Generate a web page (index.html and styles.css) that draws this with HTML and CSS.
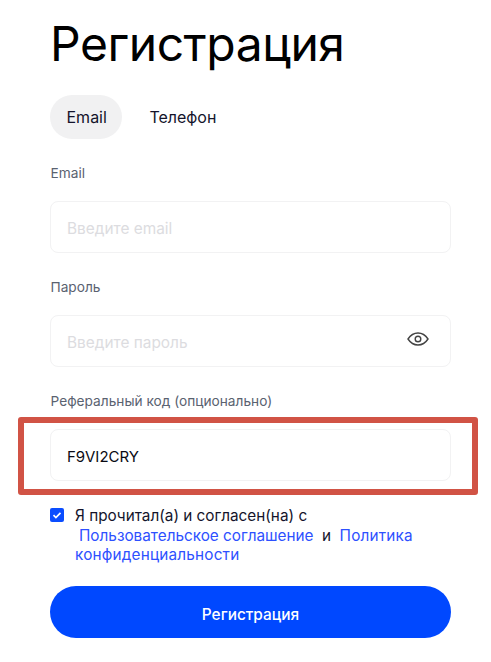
FILE: index.html
```html
<!DOCTYPE html>
<html lang="ru">
<head>
<meta charset="utf-8">
<title>Регистрация</title>
<link rel="stylesheet" href="styles.css">
</head>
<body>
<main class="page">
  <h1 class="title">Регистрация</h1>
  <div class="tabs">
    <div class="tab tab-active">Email</div>
    <div class="tab">Телефон</div>
  </div>
  <div class="field">
    <div class="label">Email</div>
    <div class="input"><span class="placeholder">Введите email</span></div>
  </div>
  <div class="field">
    <div class="label">Пароль</div>
    <div class="input">
      <span class="placeholder">Введите пароль</span>
      <svg class="eye" viewBox="0 0 24 24" width="24" height="24" fill="none" stroke="#444" stroke-width="1.4">
        <path d="M2 12c2.600-4 6-6 10-6s7.400 2 10 6c-2.600 4-6 6-10 6s-7.400-2-10-6z"/>
        <circle cx="12" cy="12" r="2.800"/>
      </svg>
    </div>
  </div>
  <div class="field">
    <div class="label">Реферальный код (опционально)</div>
    <div class="input"><span class="value">F9VI2CRY</span><div class="highlight"></div></div>
  </div>
  <div class="agree">
    <span class="checkbox">
      <svg viewBox="0 0 14 14" width="14" height="14" fill="none" stroke="#fff" stroke-width="1.700"><path d="M3.500 7.200l2.400 2.300 4.600-4.600"/></svg>
    </span>
    <p class="agree-text">Я прочитал(а) и согласен(на) с<br><a class="link link-first">Пользовательское соглашение</a><span class="and">и</span><a class="link link-wide">Политика</a><br><a class="link link-wide">конфиденциальности</a></p>
  </div>
  <div class="submit">Регистрация</div>
</main>
</body>
</html>
```
FILE: styles.css
```css
* { box-sizing: border-box; }
html, body { margin: 0; padding: 0; background: #fff; }
body { font-family: Inter, "Liberation Sans", sans-serif; color: #0a0a14; }
.page { width: 491px; height: 662px; overflow: hidden; padding: 0 40px 0 50px; }
.title { margin: 0; padding-top: 15px; height: 95px; font-size: 48px; line-height: 58px; font-weight: 400; letter-spacing: -0.45px; color: #000; }
.tabs { display: flex; gap: 11px; height: 44px; }
.tab { padding: 0 16px; border-radius: 22px; font-size: 16px; line-height: 44px; color: #14142b; }
.tab-active { padding: 0 15.500px 0 16.500px; background: #f1f1f2; }
.field { padding-top: 26px; }
.label { height: 16px; font-size: 13.700px; line-height: 16px; color: #5a6270; margin-bottom: 20px; padding-left: 0.500px; }
.input { position: relative; display: flex; align-items: center; justify-content: space-between; height: 52px; padding: 0 20px 0 16px; border: 1px solid #f2f2f3; border-radius: 8px; }
.placeholder { display: block; padding-top: 2px; font-size: 15.400px; color: #dcdce0; }
.value { display: block; padding-top: 2px; font-size: 15px; color: #0a0a14; }
.eye { display: block; margin-top: -4px; }
.highlight { position: absolute; left: -33px; top: -13px; width: 460px; height: 78px; border: 6px solid #d15345; border-radius: 3px; pointer-events: none; }
.agree { display: flex; gap: 11px; padding-top: 27px; }
.checkbox { flex: none; width: 14px; height: 14px; background: #0b4dff; border-radius: 2px; display: block; }
.checkbox svg { display: block; }
.agree-text { margin: -2px 0 0; font-size: 15.300px; line-height: 19.500px; color: #14142b; }
.link { color: #2d50ff; }
.link-first { margin-left: 4px; }
.link-wide { letter-spacing: 0.200px; }
.and { margin: 0 8.500px; }
.submit { margin-top: 21px; height: 52px; border-radius: 26px; background: #0048ff; color: #fff; font-size: 15.400px; font-weight: 550; line-height: 57px; text-align: center; }
```
